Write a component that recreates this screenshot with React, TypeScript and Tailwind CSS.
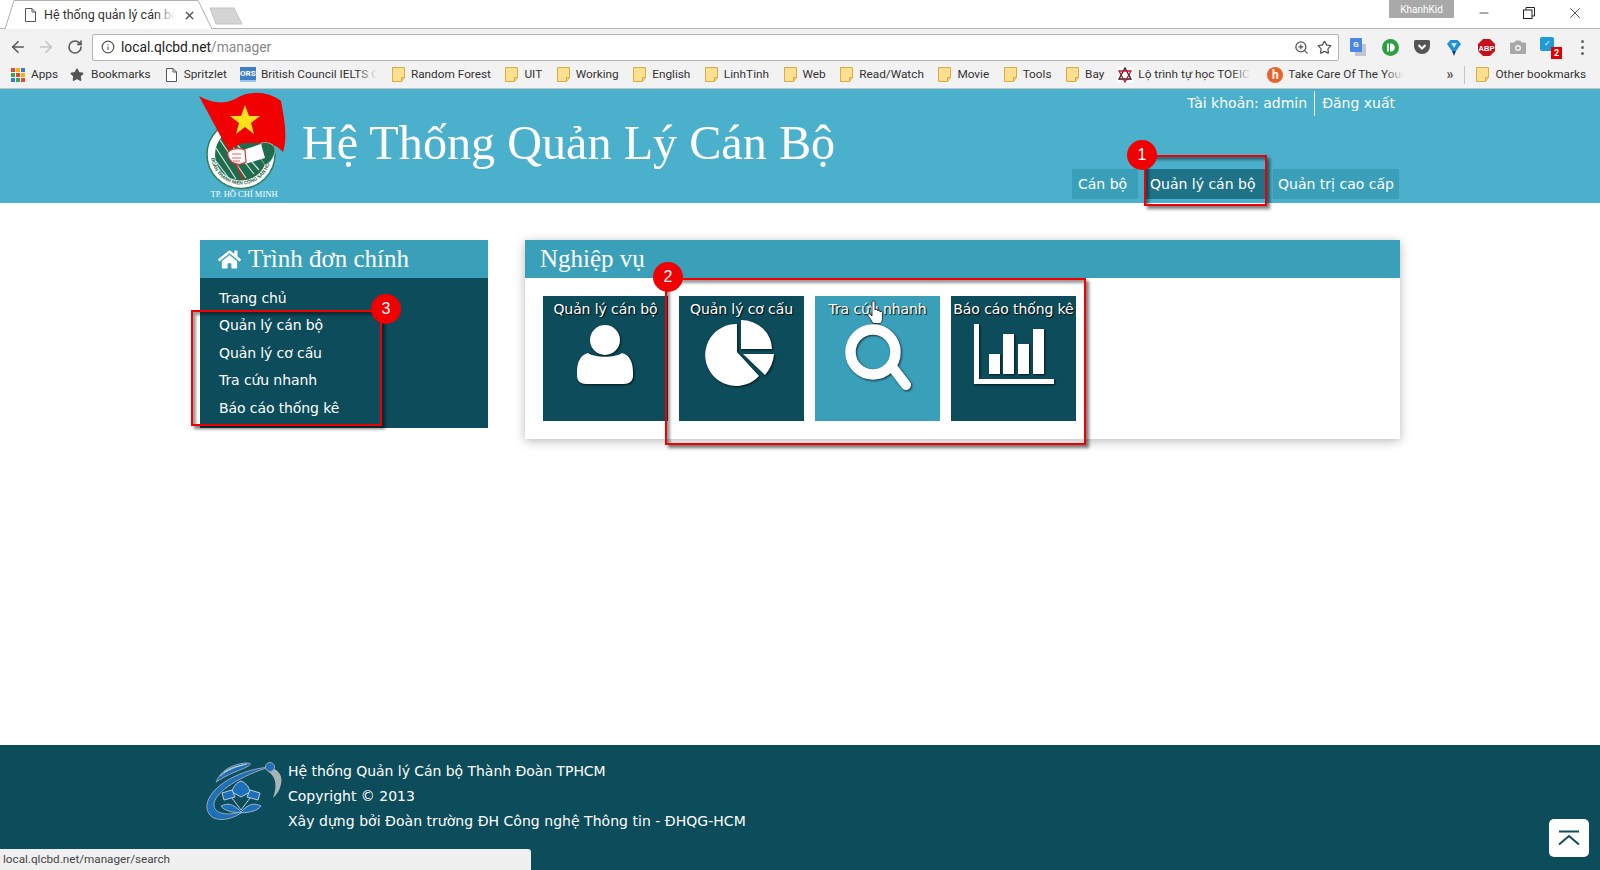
import React from 'react';
import { ArrowLeft, ArrowRight, RotateCw, Info, ZoomIn, Star, X, Minus } from 'lucide-react';
import { FaHome } from 'react-icons/fa';

const FolderIcon = () => (
  <svg width="13" height="15" viewBox="0 0 13 15" className="shrink-0">
    <path d="M.5.5h12v10l-3 4h-9z" fill="#fce08f" stroke="#d8ab45" />
    <path d="M9.5 14.5v-4h3" fill="none" stroke="#d8ab45" />
  </svg>
);

const PageIcon = () => (
  <svg width="11" height="14" viewBox="0 0 11 14" fill="#fff" stroke="#555" className="shrink-0">
    <path d="M.5.5h6.500l3.500 3.500v9.500H.5z" />
    <path d="M7 .5V4h3.500" fill="none" />
  </svg>
);

const AppsIcon = () => {
  const colors = ['#e8453c', '#f4b400', '#3c78d8', '#34a853', '#e8453c', '#f4b400', '#3c78d8', '#34a853', '#e8453c'];
  return (
    <div className="grid grid-cols-3 gap-px w-[14px] shrink-0">
      {colors.map((c, i) => (
        <span key={i} className="w-[4px] h-[4px]" style={{ backgroundColor: c }} />
      ))}
    </div>
  );
};

const Folder = ({ name }: { name: string }) => (
  <div className="flex items-center gap-[6px]">
    <FolderIcon />
    <span>{name}</span>
  </div>
);

const Faded = ({ text, className }: { text: string; className: string }) => (
  <div className={`relative overflow-hidden whitespace-nowrap ${className}`}>
    {text}
    <span className="absolute right-0 top-0 bottom-0 w-5 bg-gradient-to-r from-transparent to-[#f2f2f2]" />
  </div>
);

const BookmarksBar = () => (
  <div className="h-[28px] bg-[#f2f2f2] border-b border-[#c4c4c4] flex items-center pl-[11px] text-[11.8px] text-[#333] whitespace-nowrap">
    <div className="flex items-center gap-[6px] mr-[12px]">
      <AppsIcon />
      <span>Apps</span>
    </div>
    <div className="flex items-center gap-[7px] mr-[15px]">
      <Star size={14} fill="#555" stroke="#555" />
      <span>Bookmarks</span>
    </div>
    <div className="flex items-center gap-[7px] mr-[13px]">
      <PageIcon />
      <span>Spritzlet</span>
    </div>
    <div className="flex items-center gap-[5px] mr-[15px]">
      <div className="w-[16px] h-[15px] bg-[#3f7fc4] text-white text-[8px] font-bold flex items-center justify-center border-b-2 border-[#9cc4ec]">ORS</div>
      <Faded text="British Council IELTS Courses" className="w-[116px]" />
    </div>
    <div className="flex items-center gap-[14.5px]">
      {['Random Forest', 'UIT', 'Working', 'English', 'LinhTinh', 'Web', 'Read/Watch', 'Movie', 'Tools', 'Bay'].map((n) => (
        <Folder key={n} name={n} />
      ))}
    </div>
    <div className="flex items-center gap-[5px] ml-[13px] mr-[16px]">
      <svg width="16" height="16" viewBox="0 0 16 16" className="shrink-0">
        <rect width="16" height="16" fill="#fff" />
        <path d="M8 1l6 11H2z" fill="none" stroke="#222" strokeWidth="1.3" />
        <path d="M8 15L2 4h12z" fill="none" stroke="#c8102e" strokeWidth="1.3" />
      </svg>
      <Faded text="Lộ trình tự học TOEIC cho" className="w-[113px]" />
    </div>
    <div className="flex items-center gap-[5px]">
      <div className="w-[16px] h-[16px] rounded-full bg-[#e8632a] text-white text-[12px] font-bold flex items-center justify-center">h</div>
      <Faded text="Take Care Of The Your Body" className="w-[116px]" />
    </div>
    <div className="ml-auto flex items-center">
      <span className="text-[14px] font-bold text-[#555] mr-[11px]">»</span>
      <span className="w-px h-[18px] bg-[#c4c4c4] mr-[11px]" />
      <div className="pr-[14px]">
        <Folder name="Other bookmarks" />
      </div>
    </div>
  </div>
);

const ExtensionIcons = () => (
  <div className="flex items-center pl-[3px]">
    <div className="w-[32px] flex justify-center">
      <div className="relative w-[16px] h-[18px]">
        <div className="absolute right-0 bottom-0 w-[11px] h-[12px] bg-[#c2c6cc]" />
        <div className="absolute left-0 top-0 w-[12px] h-[14px] rounded-[1px] bg-[#4a86e8] text-white text-[8px] font-bold flex items-center justify-center">G</div>
      </div>
    </div>
    <div className="w-[32px] flex justify-center">
      <svg width="17" height="17" viewBox="0 0 17 17">
        <circle cx="8.500" cy="8.500" r="8.500" fill="#2f9e44" />
        <path d="M5 4.500h1.800v8H5zM8 4.500h1c5 0 5 8 0 8H8z" fill="#fff" />
      </svg>
    </div>
    <div className="w-[32px] flex justify-center">
      <svg width="16" height="14" viewBox="0 0 16 14">
        <path d="M1.500 0h13A1.500 1.500 0 0 1 16 1.500V6A8 8 0 0 1 0 6V1.500A1.500 1.500 0 0 1 1.500 0z" fill="#555" />
        <path d="M4.500 5L8 8.500 11.500 5" fill="none" stroke="#fff" strokeWidth="2" />
      </svg>
    </div>
    <div className="w-[32px] flex justify-center">
      <svg width="14" height="17" viewBox="0 0 14 17">
        <path d="M3.500 1h7L14 5 9 12H5L0 5z" fill="#1f8fd6" />
        <path d="M4 4h6L7 9z" fill="#bfe6fa" />
        <path d="M5 12h4l-2 5z" fill="#173f66" />
      </svg>
    </div>
    <div className="w-[32px] flex justify-center">
      <svg width="17" height="17" viewBox="0 0 17 17">
        <path d="M5 0h7l5 5v7l-5 5H5l-5-5V5z" fill="#c8101c" />
        <text x="8.500" y="11.500" textAnchor="middle" fontSize="7.500" fontWeight="700" fill="#fff" fontFamily="Liberation Sans">ABP</text>
      </svg>
    </div>
    <div className="w-[32px] flex justify-center">
      <svg width="16" height="14" viewBox="0 0 16 14">
        <path d="M1 2.500h3.500L5.500 .5h5l1 2h3.500a1 1 0 0 1 1 1V13a1 1 0 0 1-1 1H1a1 1 0 0 1-1-1V3.500a1 1 0 0 1 1-1z" fill="#a8a8a8" />
        <circle cx="8" cy="8" r="3" fill="#f2f2f2" />
        <circle cx="8" cy="8" r="1.600" fill="#a8a8a8" />
      </svg>
    </div>
    <div className="w-[32px] flex justify-center">
      <div className="relative w-[16px] h-[17px] -translate-x-[2px] -translate-y-[2px]">
        <div className="w-[14px] h-[14px] rounded-[2px] bg-[#1f9ad6] text-white text-[8px] flex items-center justify-center">✓</div>
        <div className="absolute -right-[6px] -bottom-[5px] w-[11px] h-[12px] bg-[#e00000] text-white text-[9px] font-bold leading-[12px] text-center">2</div>
      </div>
    </div>
    <div className="w-[32px] flex flex-col items-center gap-[3px]">
      <span className="w-[3px] h-[3px] rounded-full bg-[#666]" />
      <span className="w-[3px] h-[3px] rounded-full bg-[#666]" />
      <span className="w-[3px] h-[3px] rounded-full bg-[#666]" />
    </div>
  </div>
);

const BrowserChrome = () => (
  <div className="font-['Roboto',sans-serif] shrink-0">
    <div className="relative h-[29px] bg-white border-b border-[#b8b8b8]">
      <svg width="250" height="29" viewBox="0 0 250 29" className="absolute left-0 top-0">
        <path d="M5 29L14 .5h184L212 29z" fill="#fff" stroke="#b0b0b0" />
        <path d="M6 28.500h205" stroke="#fff" strokeWidth="2" />
        <path d="M210 8h24l8 16h-26z" fill="#d4d4d4" stroke="#c4c4c4" />
      </svg>
      <div className="absolute left-[25px] top-[6px] flex items-center w-[175px] text-[12.5px] text-[#333]">
        <PageIcon />
        <div className="relative ml-[8px] w-[131px] overflow-hidden whitespace-nowrap">
          Hệ thống quản lý cán bộ
          <span className="absolute right-0 top-0 bottom-0 w-5 bg-gradient-to-r from-transparent to-white" />
        </div>
        <X size={13} className="ml-[8px] shrink-0 text-[#555]" strokeWidth={2.5} />
      </div>
      <div className="absolute right-0 top-0 flex items-start">
        <div className="w-[65px] h-[18px] bg-[#a9a9a9] text-white text-[10px] flex items-center justify-center">KhanhKid</div>
        <div className="w-[146px] h-[26px] flex items-center justify-between pl-[23px] pr-[16px] text-[#222]">
          <Minus size={14} strokeWidth={1.3} />
          <svg width="12" height="12" viewBox="0 0 12 12" fill="none" stroke="#222">
            <path d="M3 3V.5h8.500V9H9" />
            <rect x=".5" y="3" width="8.500" height="8.500" />
          </svg>
          <X size={18} strokeWidth={1} />
        </div>
      </div>
    </div>
    <div className="h-[32px] bg-[#f2f2f2] flex items-center pl-[9px] pt-[4px]">
      <ArrowLeft size={18} className="text-[#5a5a5a]" strokeWidth={2.2} />
      <ArrowRight size={18} className="ml-[10px] text-[#c4c4c4]" strokeWidth={2.2} />
      <RotateCw size={16} className="ml-[12px] text-[#5a5a5a]" strokeWidth={2.4} />
      <div className="ml-[9px] w-[1247px] h-[27px] bg-white border border-[#b4b4b4] rounded-[2px] flex items-center pl-[8px] pr-[6px]">
        <Info size={14} className="text-[#555]" />
        <span className="ml-[6px] text-[13.8px] text-[#222]">local.qlcbd.net<span className="text-[#888]">/manager</span></span>
        <ZoomIn size={15} className="ml-auto text-[#555]" />
        <Star size={15} className="ml-[8px] text-[#555]" />
      </div>
      <ExtensionIcons />
    </div>
    <BookmarksBar />
  </div>
);

const YouthLogo = () => (
  <svg width="100" height="114" viewBox="0 0 100 114" className="shrink-0 overflow-visible -ml-[5px] -mt-px">
    <circle cx="46" cy="66.500" r="34" fill="#fff" stroke="#2f7d5b" strokeWidth="1.5" />
    <circle cx="46" cy="66.500" r="26" fill="#1f6b4d" />
    <path d="M21 60l20 31M25 52l26 38M31 50l28 36M38 52l26 30M20 72l13 17" stroke="#cfe6d8" strokeWidth="1.2" />
    <path id="youth-ring" d="M16 66.500a30 30 0 1 0 60 0a30 30 0 1 0-60 0" fill="none" />
    <text fontSize="4.800" fontWeight="700" fill="#1a5e40" fontFamily="Liberation Sans">
      <textPath href="#youth-ring" startOffset="2%">ĐOÀN THANH NIÊN CỘNG SẢN HỒ CHÍ MINH</textPath>
    </text>
    <path d="M35 62L48 92" stroke="#e02020" strokeWidth="1.5" />
    <path d="M4 8C16 15 28 17 40 11C55 2 72 3 86 13C89 30 93 48 88 64C84 60 80 56 72 55L48 55L33 62z" fill="#f00000" />
    <path d="M50 17l4 11h11l-9 7 3 11-9-7-9 7 3-11-9-7h11z" fill="#ffe11a" />
    <path d="M66 55c8-2 14 2 14 7s-4 13-10 15l-4-6z" fill="#1f6b4d" stroke="#cfe6d8" strokeWidth=".6" />
    <path d="M48 62L66 56L70 70L50 76z" fill="#fff" />
    <path d="M33 64c4-4 12-4 17-2l1 12c-4 3-10 3-14 0c-3-3-5-7-4-10z" fill="#fff" stroke="#d33" strokeWidth="1.2" />
    <path d="M37 66h9M37 70h9M38 73h7" stroke="#d33" strokeWidth=".8" />
    <text x="49" y="109" textAnchor="middle" fontSize="8.500" fill="#fff" fontFamily="Liberation Serif">TP. HỒ CHÍ MINH</text>
  </svg>
);

const Header = () => (
  <div className="h-[114px] shrink-0 bg-[#4bb0cc] font-['DejaVu_Sans',sans-serif]">
    <div className="w-[1200px] h-full mx-auto flex">
      <YouthLogo />
      <h1 className="ml-[7px] mt-[21px] h-fit font-['Liberation_Serif',serif] text-[48.2px] leading-[66px] text-white whitespace-nowrap">
        Hệ Thống Quản Lý Cán Bộ
      </h1>
      <div className="ml-auto flex flex-col justify-between items-end pt-[2px] pb-[4px] pr-px text-[14px] text-white">
        <div className="flex items-center h-[25px] pr-[4px]">
          <span className="pr-[7px] h-full flex items-center border-r border-white">Tài khoản: admin</span>
          <span className="pl-[7px]">Đăng xuất</span>
        </div>
        <div className="flex">
          <div className="w-[66px] h-[30px] flex items-center pl-[6px] bg-[#3a9fb9]">Cán bộ</div>
          <div className="ml-[6px] w-[121px] h-[30px] flex items-center pl-[6px] bg-[#1f7389]">Quản lý cán bộ</div>
          <div className="ml-[8px] w-[126px] h-[30px] flex items-center justify-center bg-[#3a9fb9]">Quản trị cao cấp</div>
        </div>
      </div>
    </div>
  </div>
);

const Sidebar = () => (
  <div className="w-[288px] shrink-0">
    <div className="h-[38px] bg-[#3a9fb9] flex items-center pl-[18px] text-white">
      <FaHome size={23} />
      <span className="ml-[7px] pb-[2px] font-['Liberation_Serif',serif] text-[25px] leading-none">Trình đơn chính</span>
    </div>
    <div className="bg-[#0d4c5b] h-[150px] pt-[6.5px] pl-[19px] text-[14px] text-white">
      {['Trang chủ', 'Quản lý cán bộ', 'Quản lý cơ cấu', 'Tra cứu nhanh', 'Báo cáo thống kê'].map((item) => (
        <div key={item} className="h-[27.5px] flex items-center tracking-[-0.1px]">{item}</div>
      ))}
    </div>
  </div>
);

const iconClass = 'w-[125px] h-[95px] overflow-visible drop-shadow-[1px_1px_1px_rgba(0,0,0,0.7)]';

const PersonIcon = () => (
  <svg viewBox="0 0 125 95" className={iconClass} fill="#fff">
    <circle cx="62" cy="18" r="15" />
    <path d="M45 31C52 36 72 36 79 31C87 33 90 41 90 50L90 54C90 59 86 62 81 62L43 62C38 62 34 59 34 54L34 50C34 41 37 33 45 31Z" />
  </svg>
);

const PieIcon = () => (
  <svg viewBox="0 0 125 95" className={iconClass} fill="#fff">
    <path d="M58 2L58 30L80 54A31 31 0 1 1 58 2Z" />
    <path d="M62 -2A31 29 0 0 1 93 27L62 27Z" />
    <path d="M64 32L95 32Q94 44 86 53Z" />
  </svg>
);

const SearchIcon = () => (
  <svg viewBox="0 0 125 95" className={iconClass} fill="none" stroke="#fff">
    <circle cx="58" cy="30" r="22.500" strokeWidth="10.500" />
    <path d="M78 46L91 63" strokeWidth="10" strokeLinecap="round" />
  </svg>
);

const ChartIcon = () => (
  <svg viewBox="0 0 125 95" className={iconClass} fill="#fff">
    <path d="M23 2h5v55h75v5H23z" />
    <rect x="38" y="32" width="11" height="20" />
    <rect x="52" y="12" width="11" height="40" />
    <rect x="67" y="22" width="11" height="30" />
    <rect x="82" y="7" width="11" height="45" />
  </svg>
);

const Tile = ({ label, active, children }: { label: string; active?: boolean; children: React.ReactNode }) => (
  <div className={`w-[125px] h-[125px] flex flex-col items-center text-[14px] text-white tracking-[-0.1px] [text-shadow:1px_1px_1px_#000] ${active ? 'bg-[#3a9fb9]' : 'bg-[#0d4c5b]'}`}>
    <div className="h-[26px] flex items-center whitespace-nowrap">{label}</div>
    {children}
  </div>
);

const Panel = () => (
  <div className="flex-1 h-fit bg-white shadow-[0_2px_10px_rgba(0,0,0,0.28)]">
    <div className="h-[38px] bg-[#3a9fb9] flex items-center pl-[15px] font-['Liberation_Serif',serif] text-[25px] text-white">Nghiệp vụ</div>
    <div className="flex gap-[11px] p-[18px]">
      <Tile label="Quản lý cán bộ"><PersonIcon /></Tile>
      <Tile label="Quản lý cơ cấu"><PieIcon /></Tile>
      <Tile label="Tra cứu nhanh" active><SearchIcon /></Tile>
      <Tile label="Báo cáo thống kê"><ChartIcon /></Tile>
    </div>
  </div>
);

const CollegeLogo = () => (
  <svg width="78" height="60" viewBox="0 0 78 60" className="shrink-0">
    <path d="M11 20C16 8 28 2 41 1C52 1 40 6 30 10C22 13 16 17 11 20Z" fill="#1c6fb8" stroke="#9aa7ad" />
    <path d="M15 14C22 8 32 4 42 2M19 10C25 6 32 4 38 3" stroke="#c3ccd0" fill="none" />
    <path d="M2 46C0 30 28 8 65 5C40 12 7 30 9 44C10 52 24 55 40 48C26 60 4 62 2 46Z" fill="#1c6fb8" stroke="#9aa7ad" />
    <path d="M65 5C74 8 78 14 76 22C75 28 72 32 68 36C72 26 72 14 62 9z" fill="#a9b4b9" />
    <circle cx="65" cy="5" r="4.500" fill="#1c6fb8" stroke="#9aa7ad" />
    <path d="M36 19c5 2 8 6 9 11l-9 5-9-5c1-5 4-9 9-11z" fill="#1c6fb8" stroke="#b8cfe0" />
    <path d="M17 31l10-3 3 7-11 3zM55 31l-10-3-3 7 11 3z" fill="#1c6fb8" stroke="#b8cfe0" />
    <path d="M27 36l9 12 9-12" fill="none" stroke="#b8cfe0" />
    <path d="M16 44c6-3 12-3 20 6c8-9 14-9 20-6c-6 9-34 9-40 0z" fill="#1c6fb8" stroke="#9db8cc" />
  </svg>
);

const Footer = () => (
  <div className="mt-auto h-[125px] shrink-0 bg-[#0d4c5b] font-['DejaVu_Sans',sans-serif]">
    <div className="w-[1200px] mx-auto flex pl-[5px] pt-[17px]">
      <CollegeLogo />
      <div className="ml-[5px] -mt-[3px] text-[14px] leading-[25px] text-white">
        <div className="tracking-[-0.05px]">Hệ thống Quản lý Cán bộ Thành Đoàn TPHCM</div>
        <div>Copyright © 2013</div>
        <div className="tracking-[0.03px]">Xây dựng bởi Đoàn trường ĐH Công nghệ Thông tin - ĐHQG-HCM</div>
      </div>
    </div>
  </div>
);

const Callout = ({ n, box, badge }: { n: number; box: string; badge: string }) => (
  <>
    <div className={`absolute border-2 border-[#f00000] shadow-[3px_3px_3px_rgba(0,0,0,0.5),inset_3px_3px_3px_rgba(0,0,0,0.4)] ${box}`} />
    <div className={`absolute w-[30px] h-[30px] rounded-full bg-[#f00000] text-white text-[16px] flex items-center justify-center font-['Liberation_Sans',sans-serif] ${badge}`}>{n}</div>
  </>
);

const HandCursor = () => (
  <svg width="18" height="25" viewBox="0 0 18 25" fill="#fff" stroke="#111" strokeWidth=".8" className="absolute left-[867px] top-[300px]">
    <path d="M5 2c0-1.500 3-1.500 3 0v8c0-1 2.500-1 2.500 0v1c0-1 2.500-1 2.500 0v1c0-1 2.500-.5 2.500.5v5c0 3-1 5-2 6H6c-1-2-3-5-5-8c-.8-1.500 1-2.500 2-1.500l2 2z" />
  </svg>
);

export default function App() {
  return (
    <div className="relative w-[1600px] h-[870px] overflow-hidden bg-white flex flex-col">
      <BrowserChrome />
      <Header />
      <div className="w-[1200px] mx-auto mt-[37px] flex items-start gap-[37px] font-['DejaVu_Sans',sans-serif]">
        <Sidebar />
        <Panel />
      </div>
      <Footer />

      <Callout n={1} box="left-[1144px] top-[155px] w-[123px] h-[51px]" badge="left-[1127px] top-[140px]" />
      <Callout n={2} box="left-[665px] top-[278px] w-[421px] h-[167px]" badge="left-[653px] top-[262px]" />
      <Callout n={3} box="left-[191px] top-[310px] w-[191px] h-[116px]" badge="left-[371px] top-[294px]" />

      <HandCursor />

      <div className="absolute left-0 bottom-0 w-[531px] h-[21px] bg-[#f0f0f0] rounded-tr-[3px] pl-[3px] flex items-center font-['Roboto',sans-serif] text-[11.7px] text-[#444]">
        local.qlcbd.net/manager/search
      </div>
      <div className="absolute left-[1549px] top-[819px] w-[40px] h-[38px] bg-white rounded-[5px] flex items-center justify-center">
        <svg width="22" height="16" viewBox="0 0 22 16" fill="none" stroke="#0d4c5b" strokeWidth="2">
          <path d="M1 1.500h20M1 14.500L11 6l10 8.500" />
        </svg>
      </div>
    </div>
  );
}
